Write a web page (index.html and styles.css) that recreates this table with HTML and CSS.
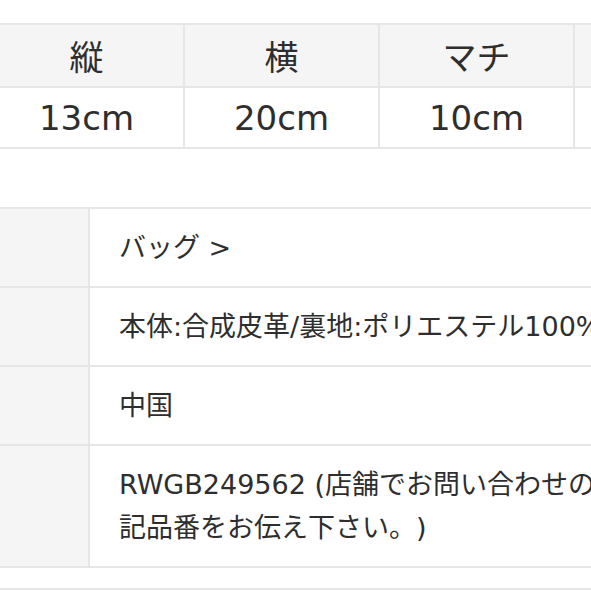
FILE: index.html
```html
<!DOCTYPE html>
<html lang="ja">
<head>
    <meta charset="UTF-8">
    <meta name="viewport" content="width=device-width, initial-scale=1.0">
    <title>商品詳細</title>
    <link rel="stylesheet" href="styles.css">
</head>
<body>
    <div class="detail">
        <table class="size-table">
            <tr class="size-head">
                <th>縦</th>
                <th>横</th>
                <th>マチ</th>
                <th>持ち手</th>
            </tr>
            <tr class="size-body">
                <td>13cm</td>
                <td>20cm</td>
                <td>10cm</td>
                <td>-</td>
            </tr>
        </table>

        <table class="spec-table">
            <tr>
                <th>カテゴリ</th>
                <td>バッグ &gt;</td>
            </tr>
            <tr>
                <th>素材</th>
                <td>本体:合成皮革/裏地:ポリエステル100%</td>
            </tr>
            <tr>
                <th>原産国</th>
                <td>中国</td>
            </tr>
            <tr>
                <th>品番</th>
                <td>RWGB249562 (店舗でお問い合わせの際は上記品番をお伝え下さい。)</td>
            </tr>
        </table>

        <div class="next-section"></div>
    </div>
</body>
</html>
```

FILE: styles.css
```css
:root {
    --font-body: "DejaVu Sans", "Noto Sans CJK JP", sans-serif;
    --color-text: #2e2e2e;
    --color-line: #e6e6e6;
    --color-shade: #f5f5f5;
}

html, body {
    margin: 0;
    height: 100%;
    overflow: hidden;
    background: #fff;
}

body {
    font-family: var(--font-body);
    color: var(--color-text);
}

.detail {
    padding-top: 23px;
    margin-left: -12px;
}

table {
    border-collapse: collapse;
    table-layout: fixed;
}

/* --- size table --- */
.size-table {
    width: 780px;
    font-size: 34px;
}
.size-table th,
.size-table td {
    width: 193px;
    border: 2px solid var(--color-line);
    text-align: center;
    padding: 0;
    font-weight: 400;
}
.size-head th {
    height: 61px;
    background: var(--color-shade);
}
.size-body td {
    height: 59px;
}

/* --- spec table --- */
.spec-table {
    margin-top: 58px;
    width: 720px;
    font-size: 27px;
    line-height: 43px;
}
.spec-table th,
.spec-table td {
    border: 2px solid var(--color-line);
    text-align: left;
    vertical-align: middle;
    font-weight: 400;
}
.spec-table th {
    width: 98px;
    padding: 0;
    background: var(--color-shade);
    color: var(--color-shade);
    overflow: hidden;
    white-space: nowrap;
}
.spec-table td {
    width: 571px;
    padding: 17px 20px 17px 29px;
    text-spacing-trim: space-all;
}

.next-section {
    margin-top: 20px;
    border-top: 2px solid var(--color-line);
    height: 40px;
}
```
